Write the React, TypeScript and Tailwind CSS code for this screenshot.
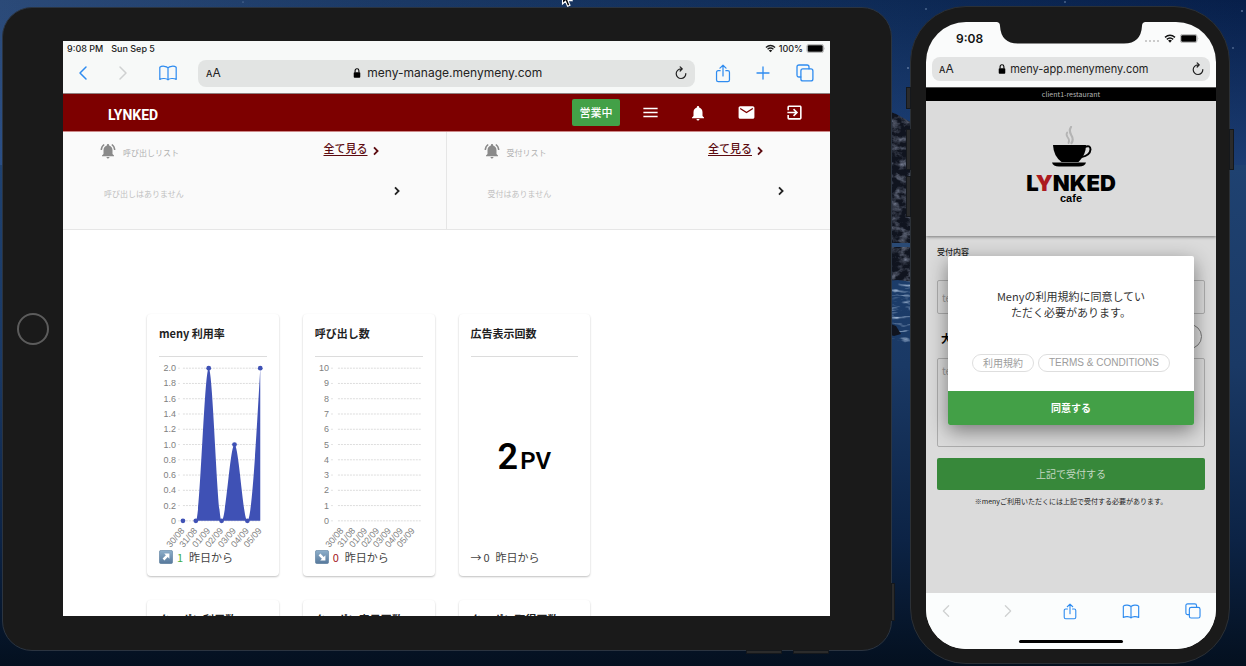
import React from "react";
import { MdExitToApp, MdMail, MdMenu, MdNotifications, MdNotificationsActive } from "react-icons/md";

const jp = "font-['Noto_Sans_CJK_JP',sans-serif]";
const ui = "font-['Inter','Noto_Sans_CJK_JP',sans-serif]";

function Wallpaper() {
  return (
    <svg className="absolute inset-0 h-full w-full" viewBox="0 0 1246 666" preserveAspectRatio="none" aria-hidden="true">
      <defs>
        <linearGradient id="sky" x1="0" y1="0" x2="1" y2="0">
          <stop offset="0" stopColor="#2b4a78" />
          <stop offset="0.3" stopColor="#1b3965" />
          <stop offset="0.65" stopColor="#0f2c58" />
          <stop offset="1" stopColor="#071f4a" />
        </linearGradient>
        <linearGradient id="dusk" x1="0" y1="0" x2="0" y2="1">
          <stop offset="0" stopColor="#2a5290" stopOpacity="0" />
          <stop offset="1" stopColor="#2a5290" stopOpacity="0.6" />
        </linearGradient>
        <linearGradient id="sea" x1="0" y1="0" x2="0" y2="1">
          <stop offset="0" stopColor="#1f4271" />
          <stop offset="0.4" stopColor="#1a3965" />
          <stop offset="0.75" stopColor="#0c2345" />
          <stop offset="1" stopColor="#04101f" />
        </linearGradient>
        <filter id="rough" x="0" y="0" width="100%" height="100%">
          <feTurbulence type="fractalNoise" baseFrequency="0.12 0.16" numOctaves="4" seed="8" />
          <feColorMatrix values="0 0 0 0 0.22  0 0 0 0 0.25  0 0 0 0 0.34  1.8 0 0 0 -0.75" />
          <feComposite in2="SourceGraphic" operator="in" />
        </filter>
        <filter id="foam" x="0" y="0" width="100%" height="100%">
          <feTurbulence type="fractalNoise" baseFrequency="0.06 0.3" numOctaves="3" seed="3" />
          <feColorMatrix values="0 0 0 0 0.38  0 0 0 0 0.5  0 0 0 0 0.68  3 0 0 0 -1.6" />
          <feComposite in2="SourceGraphic" operator="in" />
        </filter>
      </defs>
      <rect width="1246" height="666" fill="url(#sky)" />
      <rect width="1246" height="170" fill="url(#dusk)" />
      <rect y="165" width="1246" height="501" fill="url(#sea)" />
      <path d="M880 108 L896 114 L914 124 V282 L898 280 L880 281Z" fill="#10141f" />
      <path d="M880 108 L896 114 L914 124 V282 L898 280 L880 281Z" fill="#000" filter="url(#rough)" />
      <rect x="880" y="243" width="34" height="4" fill="#2a4a75" />
      <rect x="880" y="281" width="34" height="62" fill="#000" filter="url(#foam)" />
      <path d="M880 320 L896 326 L901 334 L894 336 L880 332Z" fill="#10141f" />
      <g fill="#8fa6c8">
        <circle cx="926" cy="9" r="0.7" /><circle cx="1065" cy="2" r="0.7" /><circle cx="1242" cy="11" r="0.8" />
        <circle cx="1233" cy="48" r="0.7" /><circle cx="908" cy="68" r="0.8" /><circle cx="243" cy="2" r="0.5" />
      </g>
    </svg>
  );
}

const line = { fill: "none", stroke: "currentColor", strokeLinecap: "round", strokeLinejoin: "round" } as const;

function Chevron({ flip, className }: { flip?: boolean; className: string }) {
  return (
    <svg viewBox="0 0 10 16" className={className} aria-hidden="true">
      <path d={flip ? "M2 2 L8 8 L2 14" : "M8 2 L2 8 L8 14"} {...line} strokeWidth={1.5} />
    </svg>
  );
}

function BoldChevron({ className }: { className: string }) {
  return (
    <svg viewBox="0 0 8 10" className={className} aria-hidden="true">
      <path d="M2 1.4 L5.6 5 L2 8.6" fill="none" stroke="currentColor" strokeWidth={1.8} />
    </svg>
  );
}

function Book({ className }: { className: string }) {
  return (
    <svg viewBox="0 0 20 17" className={className} aria-hidden="true">
      <path d="M10 3 C8.6 1.2 3.5 .6 1.3 2.4 V15.3 C3.5 13.9 8.4 14 10 15.8 C11.6 14 16.5 13.9 18.7 15.3 V2.4 C16.5 .6 11.4 1.2 10 3 V15.8" {...line} strokeWidth={1.3} />
    </svg>
  );
}

function Share({ className }: { className: string }) {
  return (
    <svg viewBox="0 0 16 20" className={className} aria-hidden="true">
      <path d="M5 7 H3 Q1.2 7 1.2 8.8 V16.8 Q1.2 18.6 3 18.6 H13 Q14.8 18.6 14.8 16.8 V8.8 Q14.8 7 13 7 H11 M8 12.5 V1.3 M4.8 4.4 L8 1.3 L11.2 4.4" {...line} strokeWidth={1.3} />
    </svg>
  );
}

function Tabs({ className }: { className: string }) {
  return (
    <svg viewBox="0 0 18 18" className={className} aria-hidden="true">
      <path d="M4.8 13 H3 Q1 13 1 11 V3 Q1 1 3 1 H11 Q13 1 13 3 V4.8" {...line} strokeWidth={1.3} />
      <rect x="4.9" y="4.9" width="12" height="12" rx="2" {...line} strokeWidth={1.3} />
    </svg>
  );
}

function Reload({ className }: { className: string }) {
  return (
    <svg viewBox="0 0 14 16" className={className} aria-hidden="true">
      <path d="M12.6 8.6 A5.6 5.6 0 1 1 7 3.2 H8.2 M6 .8 L8.5 3.2 L6 5.7" {...line} strokeWidth={1.4} />
    </svg>
  );
}

function Lock({ className }: { className: string }) {
  return (
    <svg viewBox="0 0 8 11" className={className} aria-hidden="true">
      <rect x="0.4" y="4.6" width="7.2" height="6" rx="1" fill="currentColor" />
      <path d="M1.9 5 V3 Q1.9 .9 4 .9 Q6.1 .9 6.1 3 V5" fill="none" stroke="currentColor" strokeWidth={1.2} />
    </svg>
  );
}

function Wifi({ className }: { className: string }) {
  return (
    <svg viewBox="0 0 12 9" className={className} aria-hidden="true">
      <path d="M1 3.4 Q6 -1 11 3.4 M2.8 5.4 Q6 2.6 9.2 5.4" fill="none" stroke="currentColor" strokeWidth={1.4} />
      <path d="M4.1 6.6 Q6 5.1 7.9 6.6 L6 8.7Z" fill="currentColor" />
    </svg>
  );
}

function Battery({ className }: { className: string }) {
  return (
    <svg viewBox="0 0 19 9" className={className} aria-hidden="true">
      <rect x="0.4" y="0.4" width="16.6" height="8.2" rx="2" fill="none" stroke="#9a9a9a" strokeWidth={0.7} />
      <rect x="1.2" y="1.2" width="15" height="6.6" rx="1.2" fill="#000" />
      <path d="M17.8 3 Q18.8 4.5 17.8 6Z" fill="#9a9a9a" />
    </svg>
  );
}

function TextSize() {
  return (
    <button type="button" aria-label="表示設定" className="flex items-baseline leading-none text-[#222]">
      <span className="text-[9px] font-medium">A</span>
      <span className="text-xs">A</span>
    </button>
  );
}

function IconButton({ label, className, children }: { label: string; className: string; children: React.ReactNode }) {
  return (
    <button type="button" aria-label={label} className={`flex items-center justify-center ${className}`}>
      {children}
    </button>
  );
}

function TabletBrowser() {
  return (
    <div className={`border-b border-[#8f8080] bg-[#f7f9f8] ${ui}`}>
      <div className="flex h-3.5 items-center justify-between px-1 text-[9px] font-medium leading-none text-[#1c1c1c]">
        <div className="flex gap-2">
          <span>9:08 PM</span>
          <span>Sun Sep 5</span>
        </div>
        <div className="flex items-center gap-[3px]">
          <Wifi className="h-[9px] w-[11px]" />
          <span>100%</span>
          <Battery className="h-[9px] w-5" />
        </div>
      </div>
      <div className="flex h-[38px] items-center pb-[5px] pt-[3px]">
        <IconButton label="戻る" className="w-10 text-[#2f8cf0]"><Chevron className="h-4 w-2.5" /></IconButton>
        <IconButton label="進む" className="w-10 text-[#cfd1d1]"><Chevron flip className="h-4 w-2.5" /></IconButton>
        <IconButton label="ブックマーク" className="w-[50px] text-[#2f8cf0]"><Book className="h-4 w-5" /></IconButton>
        <div className="ml-[5px] flex h-[27px] flex-1 items-center justify-between rounded-lg bg-[#e2e4e3] px-2">
          <TextSize />
          <div className="flex items-center gap-1.5 text-xs text-[#222]">
            <Lock className="h-2.5 w-2 text-black" />
            <span>meny-manage.menymeny.com</span>
          </div>
          <IconButton label="再読み込み" className="w-3 text-[#222]"><Reload className="h-3.5 w-3 shrink-0" /></IconButton>
        </div>
        <IconButton label="共有" className="ml-2 w-10 text-[#2f8cf0]"><Share className="h-[19px] w-4" /></IconButton>
        <IconButton label="新規タブ" className="w-10 text-[#2f8cf0]">
          <svg viewBox="0 0 14 14" className="size-3.5" aria-hidden="true"><path d="M7 1 V13 M1 7 H13" {...line} strokeWidth={1.3} /></svg>
        </IconButton>
        <IconButton label="タブ一覧" className="mr-1 w-[43px] text-[#2f8cf0]"><Tabs className="size-[18px]" /></IconButton>
      </div>
    </div>
  );
}

function AppHeader() {
  return (
    <header className="flex h-[38px] items-center border-b border-[#c88] bg-[#7d0000] pl-[45px] pr-3 text-white">
      <a href="#home" className="mt-1 font-['Roboto',sans-serif] text-sm font-bold leading-none">
        LYNKED
      </a>
      <button type="button" className={`ml-auto mr-1.5 h-[27px] w-12 rounded-xs bg-[#43a047] text-[11px] font-medium leading-none ${jp}`}>営業中</button>
      <nav className="flex">
        <IconButton label="メニュー" className="w-12"><MdMenu size={19} /></IconButton>
        <IconButton label="通知" className="w-12"><MdNotifications size={18} /></IconButton>
        <IconButton label="メール" className="w-12"><MdMail size={19} /></IconButton>
        <IconButton label="ログアウト" className="w-12"><MdExitToApp size={19} /></IconButton>
      </nav>
    </header>
  );
}

function ListPanel({ title, empty }: { title: string; empty: string }) {
  return (
    <section className="h-[97px] pl-9 pr-[45px] pt-[9px]">
      <div className="flex h-5 items-center">
        <MdNotificationsActive size={18} className="text-[#8a8a8a]" />
        <h2 className="ml-1.5 mt-1 text-[8px] text-[#b0b0b0]">{title}</h2>
        <a href="#all" className="ml-auto mr-[21px] flex items-center text-[11px] font-medium text-[#5c0b10]">
          <span className="-mt-1.5 underline underline-offset-2">全て見る</span>
          <BoldChevron className="ml-1 h-2.5 w-2" />
        </a>
      </div>
      <div className="mt-5 flex h-5 items-center justify-between pl-[5px]">
        <p className="mt-1.5 text-[8px] text-[#c0c0c0]">{empty}</p>
        <IconButton label="詳細" className="w-2 text-[#222]"><BoldChevron className="h-2.5 w-2" /></IconButton>
      </div>
    </section>
  );
}

const dates = ["30/08", "31/08", "01/09", "02/09", "03/09", "04/09", "05/09"];

function Chart({ ticks, labelX, gridX, firstX, lastX, values, name }: {
  ticks: string[]; labelX: number; gridX: [number, number]; firstX: number; lastX: number; values?: number[]; name: string;
}) {
  const top = 11;
  const bottom = 164;
  const step = (lastX - firstX) / (dates.length - 1);
  const pts = (values ?? []).map((v, i) => [firstX + i * step, bottom - (v / 2) * (bottom - top)]);
  let d = "";
  pts.forEach(([x, y], i) => {
    if (i === 0) {
      d += `M${x} ${y}`;
      return;
    }
    const [px, py] = pts[i - 1];
    const cy = i === pts.length - 1 ? (py + y) / 2 : y;
    d += ` C${px + step / 3} ${py} ${x - step / 3} ${cy} ${x} ${y}`;
  });
  return (
    <svg viewBox="0 0 108 192" className="h-48 w-full overflow-visible" role="img" aria-label={name}>
      {ticks.map((t, i) => {
        const y = top + (i * (bottom - top)) / (ticks.length - 1);
        return (
          <g key={t}>
            <line x1={labelX + 2} x2={labelX + 4} y1={y} y2={y} stroke="#dcdcdc" strokeWidth={0.8} />
            <line x1={gridX[0]} x2={gridX[1]} y1={y} y2={y} stroke="#d4d4d4" strokeWidth={0.8} strokeDasharray="2 1" />
            <text x={labelX} y={y + 3} textAnchor="end" className="fill-[#808080] font-['Liberation_Sans',sans-serif] text-[9px]">{t}</text>
          </g>
        );
      })}
      {pts.length > 0 && (
        <g className="fill-[#3f51b5]">
          <path d={`${d} V${bottom}Z`} />
          {pts.map(([x, y]) => <circle key={x} cx={x} cy={y} r={2.4} />)}
        </g>
      )}
      {dates.map((t, i) => {
        const x = firstX + i * step + 2;
        return (
          <text key={t} x={x} y={174} textAnchor="end" transform={`rotate(-50 ${x} 174)`} className="fill-[#808080] font-['Liberation_Sans',sans-serif] text-[9px]">{t}</text>
        );
      })}
    </svg>
  );
}

function ArrowTile({ down }: { down?: boolean }) {
  return (
    <svg viewBox="0 0 14 14" className="mr-1 size-3.5" aria-hidden="true">
      <defs>
        <linearGradient id="tile" x1="0" y1="0" x2="0" y2="1"><stop offset="0" stopColor="#8fb0cb" /><stop offset="1" stopColor="#56789b" /></linearGradient>
      </defs>
      <rect x="0.3" y="0.3" width="13.4" height="13.4" rx="2" fill="url(#tile)" stroke="#5e7f9e" strokeWidth={0.6} />
      <g transform={down ? "rotate(90 7 7)" : undefined}>
        <path d="M5.2 3.6 H10.4 V8.8 L8.7 7.1 L5.4 10.4 L3.6 8.6 L6.9 5.3Z" fill="#fff" />
      </g>
    </svg>
  );
}

function StatCard({ title, children, footer }: { title: string; children?: React.ReactNode; footer?: React.ReactNode }) {
  return (
    <article className="h-[262px] rounded-sm bg-white px-3 shadow-[0_1px_2px_rgba(0,0,0,0.25)]">
      <h3 className="flex h-[43px] items-center whitespace-nowrap border-b border-[#dcdcdc] pb-[3px] text-[11px] font-bold text-[#1f1f1f]">{title}</h3>
      {children}
      <p className="flex h-4 items-center text-[11px] text-[#444]">{footer}</p>
    </article>
  );
}

function Tablet() {
  return (
    <div className="relative mb-[13px] mt-px flex min-w-0 flex-1 rounded-[30px] border border-[#2b3440] bg-[#1a1a1a] pb-[34px] pl-[60px] pr-[61px] pt-[33px]">
      <div className="absolute left-3.5 top-1/2 size-8 -translate-y-1/2 rounded-full border-2 border-[#5c5c5c]" />
      <div className="absolute -right-1 bottom-[29px] h-[38px] w-1 border border-[#15181c] bg-[#2b2b2b]" />
      <div className="absolute -bottom-1 right-[109px] h-1 w-9 border border-[#15181c] bg-[#2b2b2b]" />
      <div className="absolute -bottom-1 right-[62px] h-1 w-9 border border-[#15181c] bg-[#2b2b2b]" />
      <div className="flex min-w-0 flex-1 flex-col overflow-hidden bg-white">
        <TabletBrowser />
        <AppHeader />
        <div className={`grid grid-cols-2 divide-x divide-[#e6e6e6] border-b border-[#e6e6e6] bg-[#fafafa] ${jp}`}>
          <ListPanel title="呼び出しリスト" empty="呼び出しはありません" />
          <ListPanel title="受付リスト" empty="受付はありません" />
        </div>
        <main className={`min-h-0 flex-1 overflow-hidden px-[84px] pt-[84px] ${jp}`}>
          <div className="grid grid-cols-4 gap-6">
            <StatCard title="meny 利用率" footer={<><ArrowTile /><span className="mr-1.5 text-[#3fae49]">1</span>昨日から</>}>
              <Chart name="meny 利用率" ticks={["2.0", "1.8", "1.6", "1.4", "1.2", "1.0", "0.8", "0.6", "0.4", "0.2", "0"]} labelX={17} gridX={[24, 102]} firstX={24} lastX={101.5} values={[0, 0, 2, 0, 1, 0, 2]} />
            </StatCard>
            <StatCard title="呼び出し数" footer={<><ArrowTile down /><span className="mr-1.5 text-[#a3161d]">0</span>昨日から</>}>
              <Chart name="呼び出し数" ticks={["10", "9", "8", "7", "6", "5", "4", "3", "2", "1", "0"]} labelX={14} gridX={[23, 106]} firstX={27} lastX={98.5} />
            </StatCard>
            <StatCard title="広告表示回数" footer={<><span className="mr-0.5">→</span><span className="mr-1.5">0</span>昨日から</>}>
              <div className="flex h-48 items-center justify-center pt-2 font-['Roboto',sans-serif] font-semibold text-black">
                <p className="flex items-baseline gap-0.5 text-4xl leading-none">2<span className="text-2xl leading-none">PV</span></p>
              </div>
            </StatCard>
            <div className="col-start-1"><StatCard title="クーポン利用数" /></div>
            <StatCard title="クーポン表示回数" />
            <StatCard title="クーポン取得回数" />
          </div>
        </main>
      </div>
    </div>
  );
}

function CafeLogo() {
  return (
    <div className="flex flex-col items-center font-['Liberation_Sans',sans-serif] font-bold text-black">
      <svg viewBox="0 0 42 42" className="h-[42px] w-[42px]" aria-hidden="true">
        <g fill="none" stroke="#b4b4b4" strokeLinecap="round">
          <path d="M18.5 17 Q20 14 17.5 11 Q15.8 8.5 17.2 6.5" strokeWidth={1.8} />
          <path d="M21.5 17 Q24 13.5 21.2 9 Q18.6 4.5 21 1" strokeWidth={2.2} />
        </g>
        <path d="M3 19 H36 Q36 29 28.5 36 H11.5 Q3.5 30 3 19Z" />
        <path d="M34.5 21 Q40.5 18.5 40.5 23.5 Q40 29.5 31.5 31" fill="none" stroke="currentColor" strokeWidth={2} />
        <path d="M2 36.5 H36 Q35 40.5 29 40.5 H9 Q3 40.5 2 36.5Z" />
      </svg>
      <p className="mt-1 font-['Inter',sans-serif] text-[22px] font-black leading-[22px]">L<span className="text-[#ac1a20]">Y</span>NKED</p>
      <p className="text-[11px] leading-[9px]">cafe</p>
    </div>
  );
}

function TermsDialog() {
  return (
    <div className="absolute inset-0 flex items-center px-[22px]">
      <div role="dialog" aria-modal="true" aria-label="利用規約" className="flex-1 overflow-hidden rounded-xs bg-white pt-8 text-center shadow-[0_6px_20px_rgba(0,0,0,0.45)]">
        <p className="px-12 text-[11px] leading-4 text-[#333]">Menyの利用規約に同意していただく必要があります。</p>
        <div className="mt-[34px] flex justify-center gap-1 text-[10px] leading-none text-[#9c9c9c]">
          <button type="button" className="h-[18px] rounded-full border border-[#dedede] px-2.5">利用規約</button>
          <button type="button" className="h-[18px] rounded-full border border-[#dedede] px-2.5 font-['Liberation_Sans',sans-serif]">TERMS &amp; CONDITIONS</button>
        </div>
        <button type="button" className="mt-[19px] block h-[34px] w-full bg-[#43a047] text-[10px] font-bold leading-none text-white">同意する</button>
      </div>
    </div>
  );
}

function Phone() {
  return (
    <div className="relative flex w-80 shrink-0 rounded-[56px] border border-[#2b3036] bg-[#1a1a1a] pb-3.5 pl-[15px] pr-[13px] pt-[15px]">
      <div className="absolute -left-[5px] top-20 h-[22px] w-[5px] border border-[#15181c] bg-[#2b2b2b]" />
      <div className="absolute -left-[5px] top-[122px] h-[41px] w-[5px] border border-[#15181c] bg-[#2b2b2b]" />
      <div className="absolute -left-[5px] top-[169px] h-[41px] w-[5px] border border-[#15181c] bg-[#2b2b2b]" />
      <div className="absolute -right-[5px] top-[122px] h-[41px] w-[5px] border border-[#15181c] bg-[#2b2b2b]" />
      <div className="relative flex min-w-0 flex-1 flex-col overflow-hidden rounded-[40px] bg-[#fafbfb]">
        <svg viewBox="0 0 148 22" className="absolute left-1/2 top-0 h-[22px] w-[148px] -translate-x-1/2" aria-hidden="true">
          <path d="M0 0 Q3 .5 3 4 Q4 21.5 21 21.5 H127 Q144 21.5 145 4 Q145 .5 148 0Z" fill="#1a1a1a" />
        </svg>
        <div className={`flex h-[35px] items-center justify-between pb-0.5 pl-[30px] pr-[17px] text-[#111] ${ui}`}>
          <span className="text-xs font-semibold leading-none">9:08</span>
          <span className="flex items-center gap-1">
            <span className="mr-px mt-1 flex gap-0.5">
              <i className="size-0.5 rounded-full bg-[#bbb]" /><i className="size-0.5 rounded-full bg-[#bbb]" /><i className="size-0.5 rounded-full bg-[#bbb]" /><i className="size-0.5 rounded-full bg-[#bbb]" />
            </span>
            <Wifi className="h-[9px] w-3" />
            <Battery className="h-[9px] w-[19px]" />
          </span>
        </div>
        <div className={`mx-1.5 flex h-6 items-center justify-between rounded-lg bg-[#e2e3e3] px-[7px] ${ui}`}>
          <TextSize />
          <div className="flex items-center gap-1 text-[11px] text-[#222]">
            <Lock className="h-2.5 w-2 text-black" />
            <span>meny-app.menymeny.com</span>
          </div>
          <IconButton label="再読み込み" className="w-2.5 text-[#222]"><Reload className="h-3.5 w-3 shrink-0" /></IconButton>
        </div>
        <div className={`relative mt-1.5 flex min-h-0 flex-1 flex-col overflow-hidden border-t border-[#555] bg-[#dbdbdb] ${jp}`}>
          <div className="flex h-[13px] shrink-0 items-center justify-center bg-black text-[7px] leading-none text-[#b5b5b5]">client1-restaurant</div>
          <div className="flex h-[135px] shrink-0 justify-center bg-[#dbdbdb] pt-[25px] shadow-[0_1px_3px_rgba(0,0,0,0.45)]">
            <CafeLogo />
          </div>
          <form className="px-[11px] pt-2.5" onSubmit={(e) => e.preventDefault()}>
            <label htmlFor="reception" className="block h-3 text-[8px] font-medium leading-3 text-[#222]">受付内容</label>
            <input id="reception" placeholder="text" className="mt-[22px] block h-[34px] w-full rounded-xs border border-[#adadad] bg-transparent px-1 text-[10px] placeholder:text-[#999]" />
            <div className="flex h-11 items-center justify-between pl-1 pr-[3px]">
              <label htmlFor="detail" className="pt-1 text-[11px] font-bold text-black">大人</label>
              <button type="button" aria-label="追加" className="size-[25px] rounded-full border border-[#777]" />
            </div>
            <textarea id="detail" placeholder="text" className="block h-[89px] w-full resize-none rounded-xs border border-[#adadad] bg-transparent px-1 pt-1 text-[10px] placeholder:text-[#999]" />
            <button type="submit" className="mt-[11px] block h-8 w-full rounded-xs bg-[#37883a] text-[10px] leading-none text-[#c3d8c3]">上記で受付する</button>
            <p className="mt-[5px] whitespace-nowrap text-center text-[7px] leading-3 text-[#222]">※menyご利用いただくには上記で受付する必要があります。</p>
          </form>
          <TermsDialog />
        </div>
        <div className="flex h-14 flex-col items-center justify-between bg-[#fbfdfd] pb-1.5 pt-2">
          <div className="flex h-5 w-full items-center justify-between pl-2.5 pr-[13px]">
            <IconButton label="戻る" className="w-5 text-[#cfd1d1]"><Chevron className="h-3.5 w-2.5" /></IconButton>
            <IconButton label="進む" className="w-5 text-[#cfd1d1]"><Chevron flip className="h-3.5 w-2.5" /></IconButton>
            <IconButton label="共有" className="w-5 text-[#2f8cf0]"><Share className="h-[17px] w-3.5" /></IconButton>
            <IconButton label="ブックマーク" className="w-5 text-[#2f8cf0]"><Book className="h-[15px] w-[18px]" /></IconButton>
            <IconButton label="タブ一覧" className="w-5 text-[#2f8cf0]"><Tabs className="size-4 shrink-0" /></IconButton>
          </div>
          <div className="h-[3px] w-[104px] rounded-full bg-black" />
        </div>
      </div>
    </div>
  );
}

export default function App() {
  return (
    <div className="relative h-screen overflow-hidden bg-[#04101f]">
      <Wallpaper />
      <div className="relative flex h-full gap-[18px] pb-0.5 pl-0.5 pr-4 pt-1.5">
        <Tablet />
        <Phone />
      </div>
      <svg viewBox="0 0 12 18" className="absolute -top-2.5 left-[561px] h-[18px] w-3" aria-hidden="true">
        <path d="M1.5 1 V14 L4.5 11.3 L6.6 16.3 L9 15.3 L7 10.6 H11Z" fill="#000" stroke="#fff" strokeWidth={1.1} />
      </svg>
    </div>
  );
}
